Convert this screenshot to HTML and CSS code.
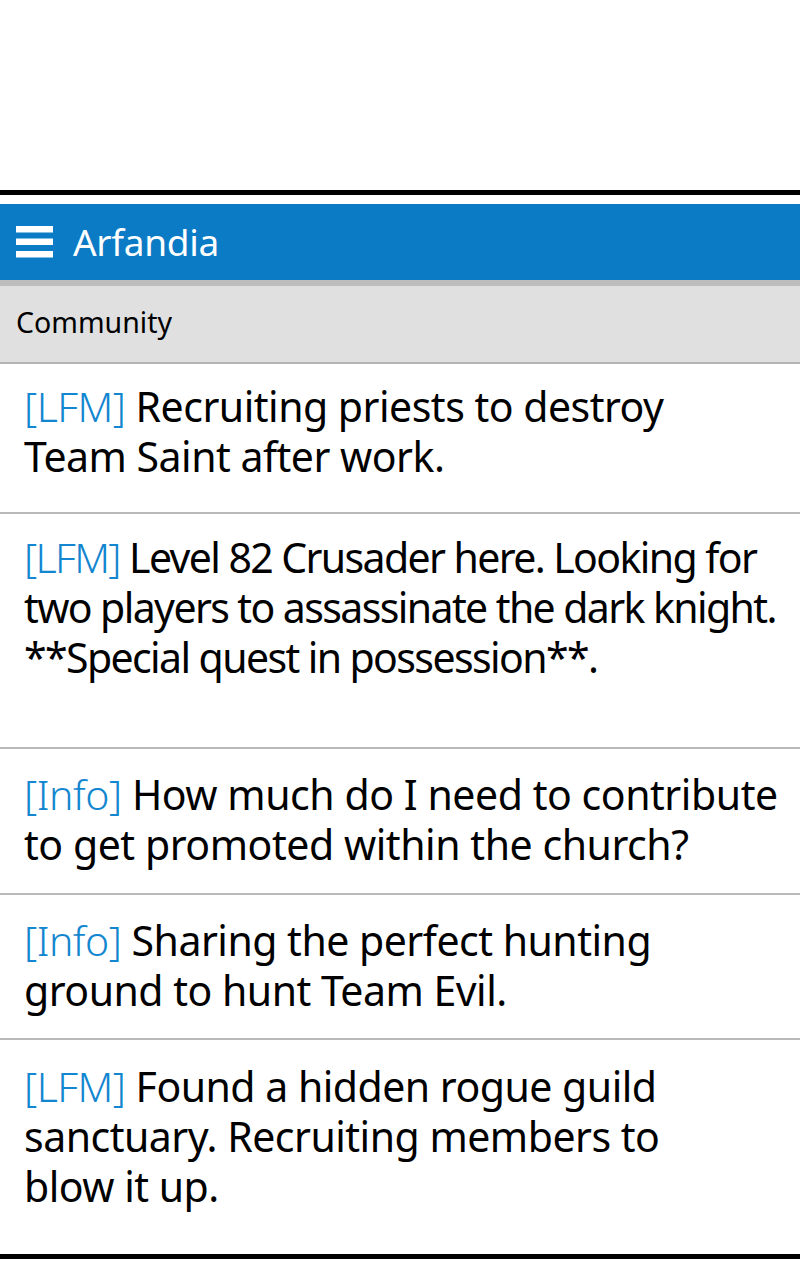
FILE: index.html
```html
<!DOCTYPE html>
<html lang="en">
<head>
    <meta charset="UTF-8">
    <meta name="viewport" content="width=device-width, initial-scale=1.0">
    <title>Arfandia</title>
    <link rel="stylesheet" href="styles.css">
</head>
<body>
    <div class="top-space"></div>
    <div class="panel">
        <div class="appbar">
            <svg class="menu-icon" width="37" height="32" viewBox="0 0 37 32">
                <rect x="0" y="0" width="37" height="6.5" fill="#fff"/>
                <rect x="0" y="12.5" width="37" height="6.5" fill="#fff"/>
                <rect x="0" y="25" width="37" height="6.5" fill="#fff"/>
            </svg>
            <span class="app-title">Arfandia</span>
        </div>
        <div class="subbar">Community</div>
        <div class="posts">
            <div class="post post-1"><span class="tag">[LFM]</span> Recruiting priests to destroy<br>Team Saint after work.</div>
            <div class="post post-2"><span class="tag">[LFM]</span> Level 82 Crusader here. Looking for<br>two players to assassinate the dark knight.<br>**Special quest in possession**.</div>
            <div class="post post-3"><span class="tag">[Info]</span> How much do I need to contribute<br>to get promoted within the church?</div>
            <div class="post post-4"><span class="tag">[Info]</span> Sharing the perfect hunting<br>ground to hunt Team Evil.</div>
            <div class="post post-5"><span class="tag">[LFM]</span> Found a hidden rogue guild<br>sanctuary. Recruiting members to<br>blow it up.</div>
        </div>
    </div>
</body>
</html>
```

FILE: styles.css
```css
body {
    margin: 0;
    background-color: #fff;
    font-family: "Noto Sans", "Open Sans", sans-serif;
    color: #000;
}

.top-space {
    height: 190px;
}

.panel {
    border-top: 5px solid #000;
    border-bottom: 5px solid #000;
    padding-top: 9px;
}

.appbar {
    height: 76px;
    box-sizing: border-box;
    padding-bottom: 2px;
    background-color: #0b7bc5;
    display: flex;
    align-items: center;
    padding-left: 16px;
    gap: 20px;
    color: #fff;
}

.menu-icon {
    display: block;
    margin-top: 2px;
}

.app-title {
    font-size: 37px;
    letter-spacing: -0.3px;
}

.subbar {
    border-top: 6px solid #bdbdbd;
    border-bottom: 2px solid #b5b5b5;
    background-color: #e0e0e0;
    height: 84px;
    box-sizing: border-box;
    padding-left: 16px;
    padding-bottom: 5px;
    font-size: 28.5px;
    display: flex;
    align-items: center;
}

.post {
    border-bottom: 2px solid #b9b9b9;
    padding: 20px 10px 0 24px;
    font-size: 41px;
    line-height: 50px;
    letter-spacing: -0.5px;
    white-space: nowrap;
    box-sizing: border-box;
}

.post:last-child {
    border-bottom: none;
}

.tag {
    color: #1386d0;
    font-weight: 300;
}

.post-1 { height: 150px; padding-top: 17px; }
.post-2 { height: 235px; padding-top: 18px; letter-spacing: -1.6px; }
.post-3 { height: 146px; letter-spacing: -0.45px; }
.post-4 { height: 145px; }
.post-5 { height: 214px; padding-top: 21px; }
```
